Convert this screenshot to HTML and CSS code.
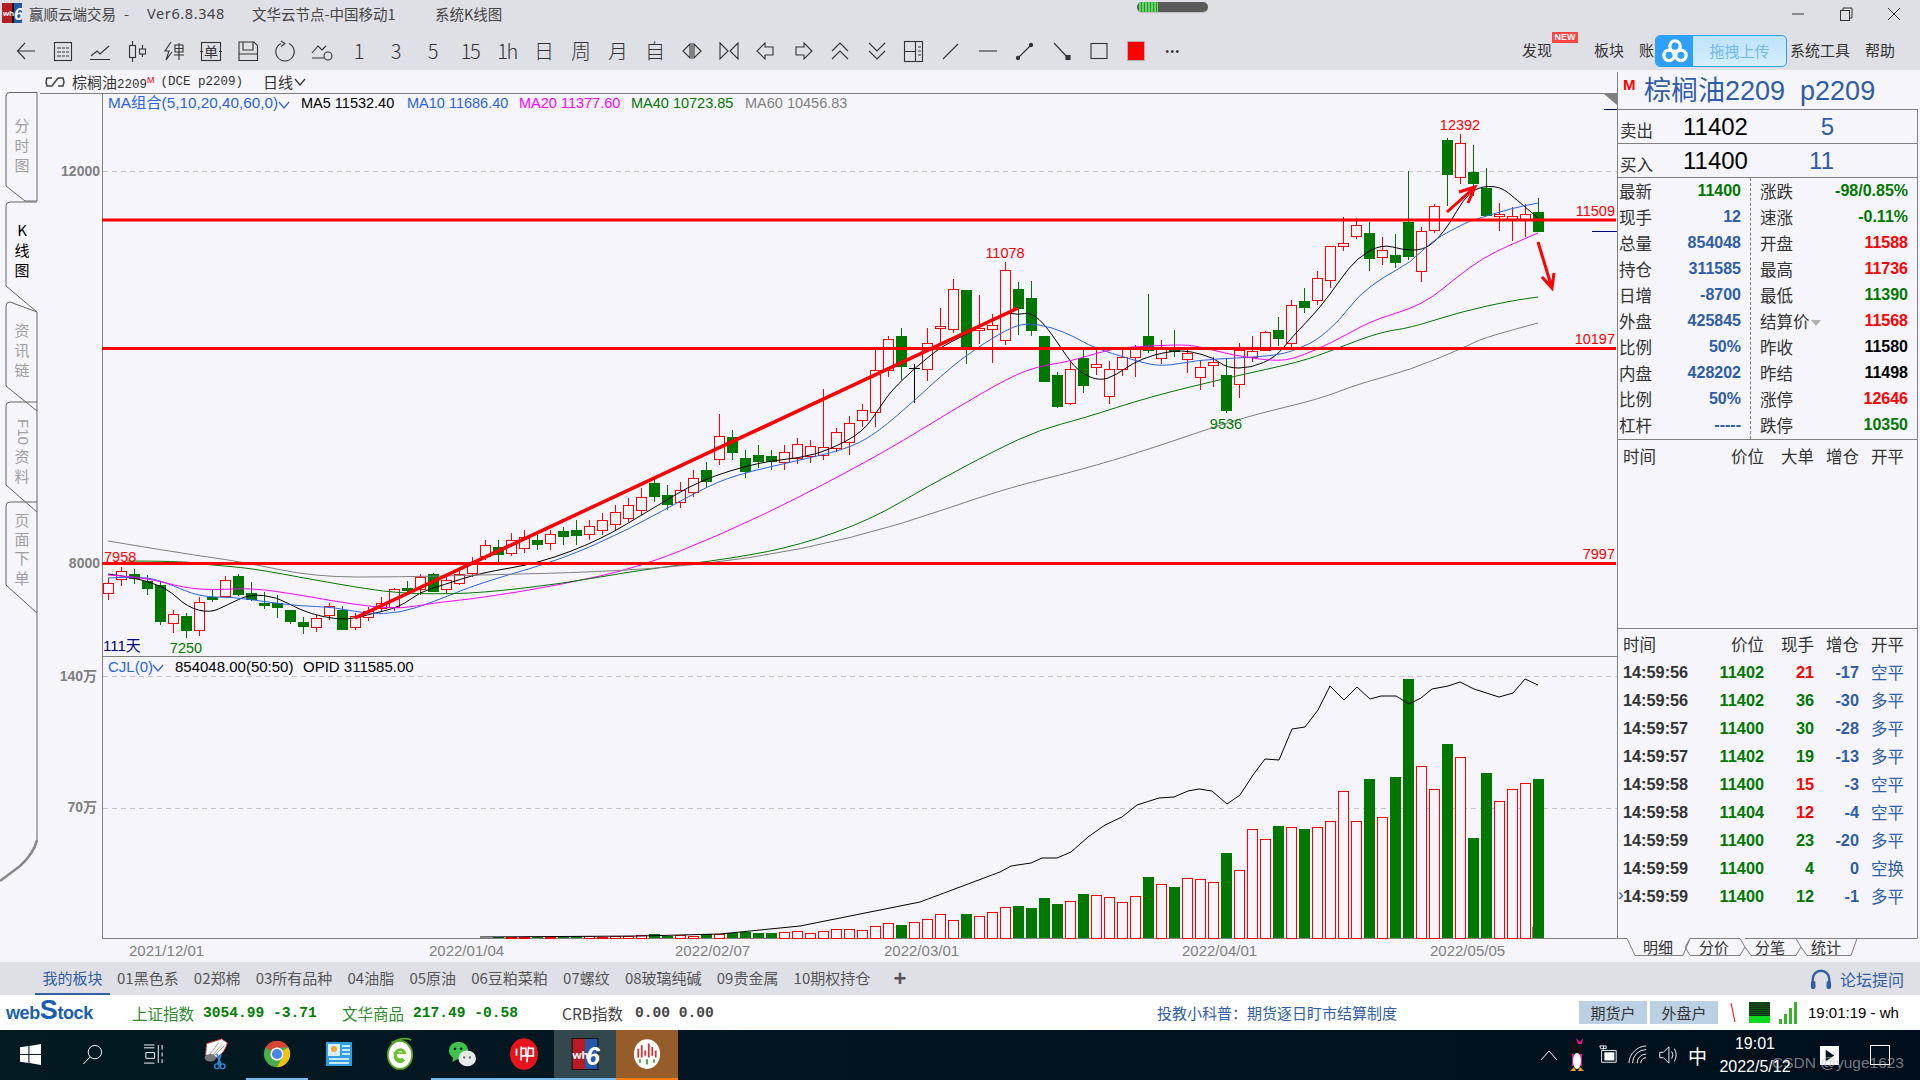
FILE: index.html
```html
<!DOCTYPE html>
<html lang="zh">
<head>
<meta charset="utf-8">
<title>赢顺云端交易</title>
<link rel="stylesheet" href="styles.css">
</head>
<body>
<div class="app">
  <header class="titlebar">
    <svg class="app-icon" viewBox="0 0 20 20"><rect width="20" height="20" fill="#111"/><rect width="10" height="20" fill="#b81c22"/><rect x="12" width="8" height="20" fill="#2458a8"/><text x="1" y="13" class="app-icon-t">wh</text><text x="12" y="17" class="app-icon-6">6</text></svg>
    <span class="tt tt-a">赢顺云端交易</span>
    <span class="tt tt-b">-</span>
    <span class="tt tt-c">Ver6.8.348</span>
    <span class="tt tt-d">文华云节点-中国移动1</span>
    <span class="tt tt-e">系统K线图</span>
    <span class="loader"><i class="loader-fill"></i></span>
    <span class="winctl">
      <svg viewBox="0 0 14 14"><path d="M1 7H13"/></svg>
      <svg viewBox="0 0 14 14"><rect x="1.5" y="3.5" width="9" height="10"/><path d="M4 3.5V1H13V11H10.5"/></svg>
      <svg viewBox="0 0 14 14"><path d="M1 1 13 13M13 1 1 13"/></svg>
    </span>
  </header>

  <nav class="toolbar">
    <span class="tb"><svg class="ic" viewBox="0 0 22 22"><path d="M20 11H3M10 3 2.5 11 10 19"/></svg></span>
    <span class="tb"><svg class="ic" viewBox="0 0 22 22"><rect x="2.5" y="2.5" width="17" height="18"/><path d="M5 8H9M10 8H13M14 8H17M5 12H9M10 12H13M14 12H17M5 16H9M10 16H13M14 16H17"/></svg></span>
    <span class="tb"><svg class="ic" viewBox="0 0 22 22"><path d="M2 16 8 11 11 14 20 6M1 19.5H21"/></svg></span>
    <span class="tb"><svg class="ic" viewBox="0 0 22 22"><path d="M6.5 1V5M6.5 18V22M16.5 5V9M16.5 14V17"/><rect x="3.5" y="5.5" width="6" height="12"/><rect x="13.5" y="9" width="6" height="5"/></svg></span>
    <span class="tb"><svg class="ic" viewBox="0 0 22 22"><path d="M8 2 2 11H6L3 20 9 12M12 5H20V12H12ZM12 8.5H20M16 3V20M11 15H21"/></svg></span>
    <span class="tb"><svg class="ic" viewBox="0 0 22 22"><rect x="1.5" y="2.5" width="19" height="18"/><path d="M0 11.5H3M19 11.5H22"/><text x="11" y="17" class="ic-t">单</text></svg></span>
    <span class="tb"><svg class="ic" viewBox="0 0 22 22"><path d="M2 2H17L20.5 5.5V20.5H2ZM6 2V10H16V2M2 14H20"/></svg></span>
    <span class="tb"><svg class="ic" viewBox="0 0 22 22"><path d="M7 3.5A9.2 9.2 0 1 0 15 3.5M7 1 11 3.5 7 6.5" /></svg></span>
    <span class="tb"><svg class="ic" viewBox="0 0 22 22"><path d="M1 13 7 6 11 10 15 6M1 18H13"/><circle cx="17" cy="16" r="4"/></svg></span>
    <span class="tb tb-t">1</span>
    <span class="tb tb-t">3</span>
    <span class="tb tb-t">5</span>
    <span class="tb tb-t tb-tt">15</span>
    <span class="tb tb-t tb-tt">1h</span>
    <span class="tb tb-t">日</span>
    <span class="tb tb-t">周</span>
    <span class="tb tb-t">月</span>
    <span class="tb tb-t">自</span>
    <span class="tb"><svg class="ic" viewBox="0 0 22 22"><path d="M9 4 2 11 9 18ZM13 4 20 11 13 18ZM11 3V19"/></svg></span>
    <span class="tb"><svg class="ic" viewBox="0 0 22 22"><path d="M2 3 10 11 2 19ZM20 3 12 11 20 19Z"/></svg></span>
    <span class="tb"><svg class="ic" viewBox="0 0 22 22"><path d="M10 3 2 11 10 19V15H18V7H10Z"/></svg></span>
    <span class="tb"><svg class="ic" viewBox="0 0 22 22"><path d="M12 3 20 11 12 19V15H4V7H12Z"/></svg></span>
    <span class="tb"><svg class="ic" viewBox="0 0 22 22"><path d="M3 11 11 3 19 11M3 19 11 11 19 19"/></svg></span>
    <span class="tb"><svg class="ic" viewBox="0 0 22 22"><path d="M3 3 11 11 19 3M3 11 11 19 19 11"/></svg></span>
    <span class="tb"><svg class="ic" viewBox="0 0 22 22"><rect x="1.5" y="1.5" width="18" height="20"/><path d="M12.5 1.5V21.5M1.5 11.5H12.5M15 7H18M15 11H18M15 15H18"/></svg></span>
    <span class="tb"><svg class="ic" viewBox="0 0 22 22"><path d="M3 19 18 4"/></svg></span>
    <span class="tb"><svg class="ic" viewBox="0 0 22 22"><path d="M2 11H20"/></svg></span>
    <span class="tb"><svg class="ic" viewBox="0 0 22 22"><path d="M3 19 18 4"/><circle cx="4" cy="18" r="1.6" class="ic-f"/><circle cx="17" cy="5" r="1.6" class="ic-f"/></svg></span>
    <span class="tb"><svg class="ic" viewBox="0 0 22 22"><path d="M3 3 17 18"/><rect x="15" y="15.5" width="4" height="4" class="ic-f"/></svg></span>
    <span class="tb"><svg class="ic" viewBox="0 0 22 22"><rect x="3" y="3.5" width="16" height="15"/></svg></span>
    <span class="tb"><i class="swatch"></i></span>
    <span class="tb tb-more">•••</span>
    <span class="tools">
      <span class="tool tool-new">发现<b class="newtag">NEW</b></span>
      <span class="tool">板块</span>
      <span class="tool">账户</span>
      <span class="tool tool-sys">系统工具</span>
      <span class="tool">帮助</span>
    </span>
    <span class="baidu">
      <span class="baidu-l"><svg viewBox="0 0 24 22"><g class="baidu-c"><circle cx="12" cy="6.5" r="4.8"/><circle cx="6.5" cy="15" r="4.8"/><circle cx="17.5" cy="15" r="4.8"/></g></svg></span>
      <span class="baidu-r">拖拽上传</span>
    </span>
  </nav>

  <main class="main">
    <svg class="rail" viewBox="0 70 38 892">
      <path class="rail-line" d="M6 186V96Q6 92.500 10 92.500H37V201H25Z"/>
      <path class="rail-line" d="M37 312 6 286V206Q6 202 10 202H37"/>
      <path class="rail-line" d="M37 411 6 386V306Q6 302 10 302L37 312"/>
      <path class="rail-line" d="M37 512 6 485V406Q6 402 10 402H37"/>
      <path class="rail-line" d="M37 613 6 585V506Q6 502 10 502H37"/>
      <path class="rail-line" d="M37 312V840"/>
      <path class="rail-curve" d="M37 840Q34 853 20 866L0 881"/>
      <text x="22" y="131" class="rt">分</text><text x="22" y="151" class="rt">时</text><text x="22" y="171" class="rt">图</text>
      <text x="22" y="236" class="rt rt-on">K</text><text x="22" y="256" class="rt rt-on">线</text><text x="22" y="276" class="rt rt-on">图</text>
      <text x="22" y="336" class="rt">资</text><text x="22" y="356" class="rt">讯</text><text x="22" y="376" class="rt">链</text>
      <text x="18" y="432" class="rt rt-rot" transform="rotate(90 18 432)">F10</text><text x="22" y="462" class="rt">资</text><text x="22" y="482" class="rt">料</text>
      <text x="22" y="526" class="rt">页</text><text x="22" y="545" class="rt">面</text><text x="22" y="564" class="rt">下</text><text x="22" y="584" class="rt">单</text>
    </svg>

    <section class="chart">
      <div class="info">
        <svg class="link-ic" viewBox="0 0 20 10"><path d="M7 1H2L1 5 2 9H7M13 1H18L19 5 18 9H13M7 9 13 1"/></svg>
        <span class="info-name">棕榈油<span class="info-mono">2209</span><sup class="info-m">M</sup></span>
        <span class="info-mono info-code">(DCE p2209)</span>
        <span class="info-per">日线<svg class="chev" viewBox="0 0 12 8"><path d="M1 1 6 7 11 1"/></svg></span>
      </div>
      <svg class="plot" viewBox="38 93 1579 869">
        <path class="frame" d="M40 93.500H1617M102.500 93V938M102 938.500H1617M102 656.500H1617"/>
        <path class="grid" d="M103 171.500H1617M103 676.500H1617M103 808.500H1617"/>
        <g id="candles"></g>
        <g id="volumes"></g>
        <g id="lines"></g>
        <path class="marker" d="M1604 109.500H1617M1592 231.500H1617"/>
        <path class="volmark" d="M1532.500 927V938"/>
        <polygon class="corner" points="1604,94 1617,94 1617,105"/>
        <rect x="102" y="218.500" width="1514" height="3" class="hline"/>
        <rect x="102" y="347" width="1514" height="3" class="hline"/>
        <rect x="102" y="562" width="1514" height="3" class="hline"/>
        <path class="trend" d="M355 618 1018 308"/>
        <path class="arrow" d="M1447 212 1475 187M1459 192 1475 187 1468 203"/>
        <path class="arrow" d="M1538 242 1552 288M1542 277 1552 288 1554 273"/>

        <text x="108" y="108" class="t-ma c-blue">MA组合(5,10,20,40,60,0)</text>
        <path class="chev-b" d="M279 102 284 108 289 102"/>
        <text x="301" y="108" class="t14 c-black">MA5 11532.40</text>
        <text x="407" y="108" class="t14 c-blue">MA10 11686.40</text>
        <text x="519" y="108" class="t14 c-mag">MA20 11377.60</text>
        <text x="631" y="108" class="t14 c-green">MA40 10723.85</text>
        <text x="745" y="108" class="t14 c-gray">MA60 10456.83</text>

        <text x="100" y="176" class="axis">12000</text>
        <text x="100" y="568" class="axis">8000</text>
        <text x="97" y="681" class="axis">140万</text>
        <text x="97" y="812" class="axis">70万</text>

        <text x="1615" y="216" class="t14 c-red end">11509</text>
        <text x="1615" y="344" class="t14 c-red end">10197</text>
        <text x="1615" y="559" class="t14 c-red end">7997</text>
        <text x="104" y="562" class="t14 c-red">7958</text>
        <text x="1460" y="130" class="t14 c-red mid">12392</text>
        <text x="1005" y="258" class="t14 c-red mid">11078</text>
        <text x="1226" y="429" class="t14 c-green mid">9536</text>
        <text x="186" y="653" class="t14 c-green mid">7250</text>
        <text x="103" y="651" class="t15 c-navy">111天</text>

        <text x="108" y="672" class="t15 c-blue">CJL(0)</text>
        <path class="chev-b" d="M153 665 158 671 163 665"/>
        <text x="175" y="672" class="t15 c-black">854048.00(50:50)</text>
        <text x="303" y="672" class="t15 c-black">OPID 311585.00</text>

        <text x="129" y="956" class="date">2021/12/01</text>
        <text x="429" y="956" class="date">2022/01/04</text>
        <text x="675" y="956" class="date">2022/02/07</text>
        <text x="884" y="956" class="date">2022/03/01</text>
        <text x="1182" y="956" class="date">2022/04/01</text>
        <text x="1430" y="956" class="date">2022/05/05</text>
      </svg>
    </section>

    <aside class="panel">
      <div class="p-title"><b class="p-m">M</b><span>棕榈油2209&nbsp;&nbsp;p2209</span></div>
      <div class="quote"><span class="q-l">卖出</span><span class="q-p">11402</span><span class="q-n">5</span></div>
      <div class="quote"><span class="q-l">买入</span><span class="q-p">11400</span><span class="q-n">11</span></div>
      <div class="stats">
        <div class="col col-l">
          <div class="s"><span>最新</span><b class="v-g">11400</b></div>
          <div class="s"><span>现手</span><b class="v-b">12</b></div>
          <div class="s"><span>总量</span><b class="v-b">854048</b></div>
          <div class="s"><span>持仓</span><b class="v-b">311585</b></div>
          <div class="s"><span>日增</span><b class="v-b">-8700</b></div>
          <div class="s"><span>外盘</span><b class="v-b">425845</b></div>
          <div class="s"><span>比例</span><b class="v-b">50%</b></div>
          <div class="s"><span>内盘</span><b class="v-b">428202</b></div>
          <div class="s"><span>比例</span><b class="v-b">50%</b></div>
          <div class="s"><span>杠杆</span><b class="v-b">-----</b></div>
        </div>
        <div class="col col-r">
          <div class="s"><span>涨跌</span><b class="v-g">-98/0.85%</b></div>
          <div class="s"><span>速涨</span><b class="v-g">-0.11%</b></div>
          <div class="s"><span>开盘</span><b class="v-r">11588</b></div>
          <div class="s"><span>最高</span><b class="v-r">11736</b></div>
          <div class="s"><span>最低</span><b class="v-g">11390</b></div>
          <div class="s"><span class="settle">结算价<i class="tri"></i></span><b class="v-r">11568</b></div>
          <div class="s"><span>昨收</span><b class="v-k">11580</b></div>
          <div class="s"><span>昨结</span><b class="v-k">11498</b></div>
          <div class="s"><span>涨停</span><b class="v-r">12646</b></div>
          <div class="s"><span>跌停</span><b class="v-g">10350</b></div>
        </div>
      </div>
      <div class="big">
        <div class="th"><span>时间</span><span>价位</span><span>大单</span><span>增仓</span><span class="oc">开平</span></div>
      </div>
      <div class="ticks">
        <div class="th"><span>时间</span><span>价位</span><span>现手</span><span>增仓</span><span class="oc">开平</span></div>
        <div class="tr"><b>14:59:56</b><b class="v-g">11402</b><b class="v-r">21</b><b class="v-b">-17</b><span class="oc v-b">空平</span></div>
        <div class="tr"><b>14:59:56</b><b class="v-g">11402</b><b class="v-g">36</b><b class="v-b">-30</b><span class="oc v-b">多平</span></div>
        <div class="tr"><b>14:59:57</b><b class="v-g">11400</b><b class="v-g">30</b><b class="v-b">-28</b><span class="oc v-b">多平</span></div>
        <div class="tr"><b>14:59:57</b><b class="v-g">11402</b><b class="v-g">19</b><b class="v-b">-13</b><span class="oc v-b">多平</span></div>
        <div class="tr"><b>14:59:58</b><b class="v-g">11400</b><b class="v-r">15</b><b class="v-b">-3</b><span class="oc v-b">空平</span></div>
        <div class="tr"><b>14:59:58</b><b class="v-g">11404</b><b class="v-r">12</b><b class="v-b">-4</b><span class="oc v-b">空平</span></div>
        <div class="tr"><b>14:59:59</b><b class="v-g">11400</b><b class="v-g">23</b><b class="v-b">-20</b><span class="oc v-b">多平</span></div>
        <div class="tr"><b>14:59:59</b><b class="v-g">11400</b><b class="v-g">4</b><b class="v-b">0</b><span class="oc v-b">空换</span></div>
        <div class="tr tr-cur"><i class="cur">›</i><b>14:59:59</b><b class="v-g">11400</b><b class="v-g">12</b><b class="v-b">-1</b><span class="oc v-b">多平</span></div>
      </div>
      <svg class="p-tabs" viewBox="1617 934 303 28">
        <path class="ptab" d="M1617.500 934V938.500M1917.500 934V938.500M1617 938.500H1627L1635 955.500H1683L1690 938.500M1690 938.500 1685 947 1690 955.500H1740L1745 947 1740 938.500H1690M1745 947 1751 955.500H1796L1801 947 1796 938.500H1745M1801 947 1807 955.500H1851L1857 938.500H1796M1857 938.500H1917"/>
        <text x="1658" y="953" class="ptab-t">明细</text>
        <text x="1714" y="953" class="ptab-t">分价</text>
        <text x="1770" y="953" class="ptab-t">分笔</text>
        <text x="1826" y="953" class="ptab-t">统计</text>
      </svg>
    </aside>
  </main>

  <div class="sheets">
    <span class="sheet sheet-on">我的板块</span>
    <span class="sheet">01黑色系</span>
    <span class="sheet">02郑棉</span>
    <span class="sheet">03所有品种</span>
    <span class="sheet">04油脂</span>
    <span class="sheet">05原油</span>
    <span class="sheet">06豆粕菜粕</span>
    <span class="sheet">07螺纹</span>
    <span class="sheet">08玻璃纯碱</span>
    <span class="sheet">09贵金属</span>
    <span class="sheet">10期权持仓</span>
    <span class="sheet-add">+</span>
    <span class="forum"><svg viewBox="0 0 24 24"><path d="M3 20V12A9 9 0 0 1 21 12V20"/><rect x="1" y="14" width="5" height="9" rx="2.400" class="forum-f"/><rect x="18" y="14" width="5" height="9" rx="2.400" class="forum-f"/></svg>论坛提问</span>
  </div>

  <div class="status">
    <span class="logo">web<span class="logo-s">S</span>tock</span>
    <span class="idx c-g1">上证指数</span><span class="num n-g n1">3054.99 -3.71</span>
    <span class="idx c-g1 i2">文华商品</span><span class="num n-g n2">217.49 -0.58</span>
    <span class="idx i3">CRB指数</span><span class="num n3">0.00 0.00</span>
    <span class="notice">投教小科普：期货逐日盯市结算制度</span>
    <span class="acct">期货户</span><span class="acct">外盘户</span>
    <svg class="slash" viewBox="0 0 6 20"><path d="M1 0 5 19"/></svg>
    <span class="meter"><i></i></span>
    <svg class="bars" viewBox="0 0 20 22"><rect x="0" y="17" width="3" height="5"/><rect x="5" y="12" width="3" height="10"/><rect x="10" y="6" width="3" height="16"/><rect x="15" y="0" width="3" height="22"/></svg>
    <span class="clock">19:01:19 - wh</span>
  </div>

  <footer class="taskbar">
    <span class="task"><svg class="t-ic" viewBox="0 0 20 20"><path class="wf" d="M0 3 8 2V9.500H0ZM9 1.800 20 0V9.500H9ZM0 10.500H8V18L0 17ZM9 10.500H20V20L9 18.200Z"/></svg></span>
    <span class="task"><svg class="t-ic" viewBox="0 0 22 22"><circle cx="13.500" cy="8.500" r="7" class="ws"/><path class="ws" d="M8.500 13.500 1.500 21"/></svg></span>
    <span class="task"><svg class="t-ic" viewBox="0 0 22 22"><path class="ws" d="M1 1H12M1 4H12M3 9H12V15H3ZM1 20H12M16 1V20M20 1V6M20 9V13M20 16V20"/></svg></span>
    <span class="task"><svg class="t-ic t-big" viewBox="0 0 28 34"><path d="M4 6 20 1 26 5Q24 14 16 20 8 24 3 18Z" fill="#fff" stroke="#d43a3a"/><path d="M7 18 17 5M10 19 20 7M13 18 23 8" stroke="#999" fill="none"/><ellipse cx="8" cy="21" rx="6" ry="4" fill="#777"/><path d="M15 17 19 28M19 17 16 28" stroke="#2b8be0" stroke-width="2" fill="none"/><circle cx="15" cy="30" r="2.500" fill="none" stroke="#2b8be0" stroke-width="1.500"/><circle cx="21" cy="30" r="2.500" fill="none" stroke="#2b8be0" stroke-width="1.500"/></svg></span>
    <span class="task"><svg class="t-ic t-big" viewBox="0 0 32 32"><circle cx="16" cy="16" r="15" fill="#4aae48"/><path d="M16 1A15 15 0 0 1 29 8.500H16A7.500 7.500 0 0 0 9.500 12.200L3 8.500A15 15 0 0 1 16 1Z" fill="#db4437"/><path d="M29 8.500A15 15 0 0 1 16 31L22.500 19.700A7.500 7.500 0 0 0 22.500 12Z" fill="#f4c20d"/><circle cx="16" cy="16" r="7.500" fill="#fff"/><circle cx="16" cy="16" r="5.800" fill="#4a86e8"/></svg></span>
    <span class="task"><svg class="t-ic t-big" viewBox="0 0 28 28"><rect x="1" y="2" width="26" height="24" fill="#2f9fe0"/><rect x="3" y="4" width="12" height="12" fill="#d8eefa"/><circle cx="9" cy="9" r="3" fill="#f0a830"/><path d="M17 6H25M17 10H25M17 14H25M4 19H24M4 23H24" stroke="#fff" stroke-width="1.500"/></svg></span>
    <span class="task"><svg class="t-ic t-big" viewBox="0 0 30 34"><ellipse cx="15" cy="18" rx="13" ry="15" fill="#fff" stroke="#5aa828" stroke-width="2"/><path d="M8 17H22A7 8 0 1 0 20.500 24L17.500 21A3.800 3.800 0 1 1 18 15H8Z" fill="#6cc02c"/><path d="M6 5Q18-2 27 2" stroke="#5aa828" stroke-width="2" fill="none"/></svg></span>
    <span class="task"><svg class="t-ic t-big" viewBox="0 0 32 30"><ellipse cx="12" cy="11" rx="11" ry="10" fill="#3fc24b"/><path d="M6 18 5 24 12 20Z" fill="#3fc24b"/><ellipse cx="22" cy="20" rx="10" ry="9" fill="#e8e8e8"/><circle cx="8" cy="9" r="1.500" fill="#123"/><circle cx="15" cy="9" r="1.500" fill="#123"/><circle cx="18.500" cy="19" r="1.300" fill="#666"/><circle cx="25" cy="19" r="1.300" fill="#666"/></svg></span>
    <span class="task"><svg class="t-ic t-big" viewBox="0 0 30 34"><ellipse cx="15" cy="17" rx="15" ry="17" fill="#e8141c"/><path d="M7 11V19M12 9V24M12 11H17V19H12M20 9 18 26M20 11H25V19H19" stroke="#fff" stroke-width="1.800" fill="none"/></svg></span>
    <span class="task task-wh"><svg class="t-ic t-big" viewBox="0 0 30 36"><rect width="30" height="36" fill="#0a0a0a"/><rect x="1" y="1" width="14" height="34" fill="#b81c22"/><rect x="15" y="1" width="14" height="34" fill="#2458a8"/><text x="1" y="24" class="wh-t">wh</text><text x="16" y="30" class="wh-6">6</text></svg></span>
    <span class="task task-or"><svg class="t-ic t-big" viewBox="0 0 32 36"><ellipse cx="16" cy="18" rx="15" ry="17" fill="#fff"/><path d="M6 12V22M10 8V22M14 14V20M18 6V22M22 10V20M26 14V22" stroke="#d83030" stroke-width="2"/><path d="M8 24V28M16 24V30M24 24V28" stroke="#3a9a3a" stroke-width="2"/></svg></span>
    <span class="tray">
      <svg class="tr-ic" viewBox="0 0 18 12"><path class="ws" d="M1 11 9 2 17 11"/></svg>
      <svg class="tr-pg" viewBox="0 0 18 36"><ellipse cx="9" cy="10" rx="5.500" ry="7" fill="#111"/><path d="M4 17H14V29H4Z" fill="#e8128c"/><ellipse cx="9" cy="24" rx="4" ry="8" fill="#fff"/><path d="M8 1 12 5 15 1 14 7 10 7Z" fill="#e8128c"/><path d="M2 34H8L6 30ZM10 34H16L12 30Z" fill="#f0a020"/></svg>
      <svg class="tr-ic tr-bat" viewBox="0 0 22 22"><path class="ws" d="M4 6H20V19H4ZM6 1V5M2 1H9V4H3Z"/><rect x="7" y="8" width="11" height="9" class="wf"/></svg>
      <svg class="tr-ic tr-wifi" viewBox="0 0 22 22"><path class="ws" d="M1 20A20 20 0 0 1 20 1M5 20A15 15 0 0 1 20 5M10 20A10 10 0 0 1 20 10M14 20A6 6 0 0 1 20 14"/></svg>
      <svg class="tr-ic tr-vol" viewBox="0 0 22 22"><path class="ws" d="M2 8H6L12 2V20L6 14H2ZM15 7Q18 11 15 15M18 4Q22 11 18 18"/></svg>
      <span class="ime">中</span>
      <span class="dt"><span>19:01</span><span>2022/5/12</span></span>
      <svg class="tr-note" viewBox="0 0 20 20"><path class="wf" d="M0 0H20V20H0Z"/><path d="M6 4 15 10 6 16Z" fill="#021820"/></svg>
      <svg class="tr-sq" viewBox="0 0 20 20"><rect x="0.500" y="0.500" width="19" height="19" class="ws"/></svg>
      <span class="mark">CSDN @yuge1623</span>
    </span>
  </footer>
</div>
<script src="chart.js"></script>
</body>
</html>
```

FILE: styles.css
```css
* { box-sizing: border-box; }
html, body { margin: 0; padding: 0; height: 100%; overflow: hidden; }
body { font-family: "Noto Sans CJK SC", "Liberation Sans", sans-serif; color: #333; background: #f5f5fb; }
.app { width: 1920px; height: 1080px; display: flex; flex-direction: column; }
svg { display: block; }

/* title */
.titlebar { height: 28px; flex: none; background: #dfe0e5; display: flex; align-items: center; font-size: 14.500px; position: relative; padding-bottom: 2px; }
.app-icon { width: 20px; height: 20px; margin-left: 2px; flex: none; }
.app-icon-t { font: bold 8px "Liberation Sans", sans-serif; fill: #fff; }
.app-icon-6 { font: italic bold 17px "Liberation Sans", sans-serif; fill: #fff; }
.tt { white-space: nowrap; color: #444; }
.tt-a { margin-left: 7px; width: 95px; }
.tt-b { width: 23px; }
.tt-c { width: 105px; letter-spacing: .6px; font-family: "Noto Sans", sans-serif; }
.tt-d { width: 183px; }
.tt-e { width: 80px; }
.loader { position: absolute; left: 1137px; top: 2px; width: 71px; height: 10px; border-radius: 5px; background: #5a5a5a; box-shadow: 0 1px 1px #bbb; overflow: hidden; }
.loader-fill { display: block; width: 19px; height: 10px; margin-left: 2px; background: repeating-linear-gradient(90deg, #5cd860 0 2px, #3b8a40 2px 3px); }
.winctl { margin-left: auto; display: flex; gap: 34px; margin-right: 19px; margin-top: 2px; align-items: center; }
.winctl svg { width: 14px; height: 14px; fill: none; stroke: #333; stroke-width: 1; }

/* toolbar */
.toolbar { height: 42px; flex: none; background: #dfe0e5; display: flex; align-items: center; padding-left: 7.500px; position: relative; }
.tb { width: 37px; flex: none; display: flex; justify-content: center; align-items: center; height: 24px; margin-top: 4px; }
.ic { width: 22px; height: 22px; fill: none; stroke: #333; stroke-width: 1.100; overflow: visible; }
.ic-f { fill: #333; }
.ic-t { font-size: 14px; fill: #333; stroke: none; text-anchor: middle; }
.tb-t { font-size: 20px; font-weight: 300; color: #333; line-height: 1; }
.tb-tt { letter-spacing: -1.500px; }
.tb-more { font: 10px "Liberation Sans", sans-serif; letter-spacing: 1.500px; color: #333; }
.swatch { width: 18px; height: 20px; background: #f00; border: 1px solid #b0b0b0; display: block; }
.tools { margin-left: auto; display: flex; align-items: center; padding-right: 25px; font-size: 15px; color: #333; }
.tool { margin-left: 15px; white-space: nowrap; position: relative; }
.tool-new { margin-right: 27px; }
.tool-sys { margin-left: 121px; }
.newtag { position: absolute; left: 30px; top: -7px; width: 26px; height: 11px; background: #f44; color: #fff; font: bold 9px/11px "Liberation Sans", sans-serif; text-align: center; }
.baidu { position: absolute; right: 133px; top: 7px; width: 132px; height: 32px; border: 1px solid #2e9ffb; border-radius: 5px; display: flex; overflow: hidden; background: linear-gradient(#bfe3fd, #d4eefe); }
.baidu-l { width: 37px; flex: none; background: #2e9ffb; display: flex; align-items: center; justify-content: center; }
.baidu-l svg { width: 26px; height: 24px; }
.baidu-c { fill: none; stroke: #fff; stroke-width: 3; }
.baidu-r { flex: 1; text-align: center; font-size: 15px; line-height: 30px; color: #6fb9f5; }

/* main */
.main { height: 892px; flex: none; display: flex; background: #f5f5fb; }
.rail { width: 38px; height: 892px; flex: none; }
.rail-line { fill: none; stroke: #666; stroke-width: 1; }
.rail-curve { fill: none; stroke: #888; stroke-width: 2.500; }
.rt { font-size: 15px; fill: #a0a0a0; text-anchor: middle; }
.rt-on { fill: #000; }
.rt-rot { font-family: "Liberation Sans", sans-serif; }

.chart { width: 1579px; flex: none; display: flex; flex-direction: column; }
.info { height: 23px; flex: none; display: flex; align-items: center; font-size: 15px; color: #333; padding-left: 7px; }
.link-ic { width: 20px; height: 10px; fill: none; stroke: #444; stroke-width: 1.500; flex: none; }
.info-name { margin-left: 7px; white-space: nowrap; }
.info-mono { font-family: "Liberation Mono", monospace; font-size: 12.500px; }
.info-m { color: #f00; font: 9px "Liberation Sans", sans-serif; vertical-align: 5px; line-height: 0; }
.info-code { margin-left: 6px; }
.info-per { margin-left: 20px; display: flex; align-items: center; gap: 1px; }
.chev { width: 12px; height: 8px; fill: none; stroke: #333; stroke-width: 1.300; }
.plot { width: 1579px; height: 869px; flex: none; font-family: "Liberation Sans", "Noto Sans CJK SC", sans-serif; }
.frame { fill: none; stroke: #808080; stroke-width: 1; shape-rendering: crispEdges; }
.grid { fill: none; stroke: #c4c4c4; stroke-width: 1; stroke-dasharray: 5 4; shape-rendering: crispEdges; }
.marker { fill: none; stroke: #000080; stroke-width: 1; shape-rendering: crispEdges; }
.volmark { fill: none; stroke: #808080; stroke-width: 1; shape-rendering: crispEdges; }
.corner { fill: #808080; }
.hline { fill: #f00; }
.trend { fill: none; stroke: #f00; stroke-width: 3.500; }
.arrow { fill: none; stroke: #f00; stroke-width: 3; }
.t14 { font-size: 14.500px; }
.t15 { font-size: 15px; }
.t-ma { font-size: 15.300px; }
.end { text-anchor: end; }
.mid { text-anchor: middle; }
.c-blue { fill: #2a64e6; }
.c-black { fill: #000; }
.c-mag { fill: #f0f; }
.c-green { fill: #007800; }
.c-gray { fill: #808080; }
.c-red { fill: #f00; }
.c-navy { fill: #000080; }
.chev-b { fill: none; stroke: #2a64e6; stroke-width: 1.200; }
.axis { font-size: 14px; font-weight: bold; fill: #808080; text-anchor: end; }
.date { font-size: 15px; fill: #808080; }
.up-b { fill: #f5f5fb; stroke: #f00; stroke-width: 1; shape-rendering: crispEdges; }
.dn-b { fill: #007800; shape-rendering: crispEdges; }
.up-w { stroke: #f00; stroke-width: 1; shape-rendering: crispEdges; }
.dn-w { stroke: #007800; stroke-width: 1; shape-rendering: crispEdges; }
.dj-w { stroke: #000; stroke-width: 1; shape-rendering: crispEdges; }
.ma { fill: none; stroke-width: 1; stroke-linejoin: round; }
.ma5 { stroke: #000; }
.ma10 { stroke: #2a64e6; }
.ma20 { stroke: #f0f; }
.ma40 { stroke: #007800; }
.ma60 { stroke: #808080; }

/* panel */
.panel { width: 303px; flex: none; display: flex; flex-direction: column; position: relative; font-size: 16.500px; }
.p-title { height: 39px; flex: none; border-left: 1px solid #808080; display: flex; align-items: flex-start; font-size: 27px; color: #2f5da8; line-height: 39px; white-space: nowrap; font-family: "Liberation Sans", "Noto Sans CJK SC", sans-serif; margin-top: 2px; margin-bottom: -2px; }
.p-m { color: #f00; font-size: 15px; width: 26px; padding-left: 5px; line-height: 26px; flex: none; }
.quote { height: 34px; flex: none; border-left: 1px solid #808080; border-right: 1px solid #808080; border-top: 1px solid #808080; width: 301px; position: relative; display: flex; align-items: center; }
.q-l { margin-left: 2px; margin-top: 6px; width: 63px; }
.q-p { font: 24px "Liberation Sans", sans-serif; color: #000; width: 67px; }
.q-n { font: 24px "Liberation Sans", sans-serif; color: #2f5da8; margin-left: 17px; width: 67px; text-align: right; }
.stats { height: 263px; flex: none; width: 301px; border: 1px solid #808080; display: flex; }
.col { display: flex; flex-direction: column; }
.col-l { width: 133px; padding: 0 9px 0 1px; border-right: 1px dashed #808080; }
.col-r { width: 166px; padding: 0 9px 0 9px; }
.s { height: 26px; display: flex; justify-content: space-between; align-items: center; white-space: nowrap; }
.s span { margin-top: -1px; }
.s b { font: bold 16px "Liberation Sans", sans-serif; }
.settle { display: flex; align-items: center; }
.tri { width: 0; height: 0; border: 5.500px solid transparent; border-top: 6px solid #b0b0b0; border-bottom: 0; margin-left: 1px; margin-top: 5px; }
.v-g { color: #007800; }
.v-b { color: #2f5da8; }
.v-r { color: #f00; }
.v-k { color: #000; }
.big { height: 188px; flex: none; width: 301px; border-left: 1px solid #808080; border-right: 1px solid #808080; padding-top: 1px; }
.th, .tr { display: grid; grid-template-columns: 71px 70px 50px 45px 45px; padding-left: 5px; align-items: center; white-space: nowrap; }
.th { height: 30px; }
.ticks .th { height: 29px; }
.th span:not(:first-child) { text-align: right; }
.ticks { height: 306px; flex: none; width: 301px; border: 1px solid #808080; border-bottom: 0; }
.tr { height: 28px; position: relative; }
.tr b { font: bold 16.300px "Liberation Sans", sans-serif; text-align: right; }
.tr b:first-child, .tr-cur b:nth-of-type(1) { text-align: left; color: #333; }
.tr .oc { text-align: right; font-size: 16.500px; }
.cur { position: absolute; left: 0; top: 3px; font: 17px "Liberation Sans", sans-serif; color: #2f5da8; }
.p-tabs { width: 303px; height: 28px; flex: none; }
.ptab { fill: none; stroke: #808080; stroke-width: 1; }
.ptab-t { font-size: 15px; fill: #333; text-anchor: middle; }

/* sheets */
.sheets { height: 33px; flex: none; background: #dfe0e5; display: flex; align-items: center; padding-left: 35px; font-size: 15px; color: #555; white-space: nowrap; }
.sheet { margin-right: 15.200px; height: 33px; line-height: 32px; }
.sheet-on { color: #2f5da8; width: 75px; text-align: center; border-bottom: 2px solid #2f5da8; margin-right: 7px; }
.sheet-add { font: bold 22px "Liberation Sans", sans-serif; color: #555; margin-left: 8px; }
.forum { margin-left: auto; margin-right: 16px; display: flex; align-items: center; font-size: 16px; color: #2f5da8; gap: 6px; }
.forum svg { width: 26px; height: 22px; fill: none; stroke: #2f5da8; stroke-width: 2.500; }
.forum-f { fill: #2f5da8; stroke: none; }

/* status */
.status { height: 35px; flex: none; background: #fff; display: flex; align-items: center; font-size: 15.500px; white-space: nowrap; }
.logo { width: 132px; padding-left: 6px; font: bold 18px "Liberation Sans", sans-serif; color: #1a5fb4; letter-spacing: -.4px; }
.logo-s { font-size: 27px; line-height: 18px; }
.idx { color: #444; }
.c-g1 { color: #2d8a2d; }
.num { font: bold 14.600px "Liberation Mono", monospace; color: #333; margin-left: 9px; }
.n-g { color: #008000; }
.n1 { width: 139px; }
.n2 { width: 149px; }
.n3 { margin-left: 12px; width: 522px; color: #444; }
.notice { font-size: 15px; color: #2f5da8; width: 422px; }
.acct { width: 68px; height: 23px; background: #bcd0e3; text-align: center; line-height: 23px; font-size: 15px; margin-right: 3px; }
.slash { width: 6px; height: 20px; fill: none; stroke: #f00; stroke-width: 1; margin-left: 9px; }
.meter { width: 21px; height: 21px; margin-left: 13px; background: repeating-linear-gradient(0deg, #0a5a12 0 1px, #18301a 1px 2px); display: flex; align-items: flex-end; }
.meter i { display: block; width: 100%; height: 7px; background: #0cdb20; }
.bars { width: 20px; height: 22px; margin-left: 9px; fill: #34b52a; }
.clock { margin-left: 9px; font: 15px "Liberation Sans", sans-serif; color: #000; }

/* taskbar */
.taskbar { height: 50px; flex: none; background: linear-gradient(90deg, #031a22, #021420 50%, #010f1c); display: flex; position: relative; }
.task { width: 61.600px; height: 50px; flex: none; display: flex; align-items: center; justify-content: center; border-bottom: 2px solid transparent; }
.task:nth-child(5), .task:nth-child(8), .task:nth-child(9) { border-bottom-color: #76b9ed; }
.task-wh { background: #33474f; border-bottom-color: #76b9ed; }
.task-or { background: #965d2a; border-bottom-color: #ff7a12; }
.t-ic { width: 21px; height: 21px; overflow: visible; }
.t-big { width: 28px; height: 32px; }
.wf { fill: #fff; }
.ws { fill: none; stroke: #fff; stroke-width: 1; }
.wh-t { font: bold 13px "Liberation Sans", sans-serif; fill: #fff; }
.wh-6 { font: italic bold 28px "Liberation Sans", sans-serif; fill: #fff; }
.tray { margin-left: auto; display: flex; align-items: center; color: #fff; position: relative; padding-right: 30px; }
.tr-ic { width: 18px; height: 12px; margin-right: 10px; }
.tr-pg { width: 18px; height: 36px; margin-right: 12px; }
.tr-bat, .tr-wifi, .tr-vol { width: 20px; height: 20px; margin-right: 10px; }
.ime { font-size: 19px; width: 28px; }
.dt { display: flex; flex-direction: column; align-items: center; width: 78px; font: 16px/23px "Liberation Sans", sans-serif; }
.tr-note { width: 19px; height: 19px; margin-left: 26px; }
.tr-sq { width: 20px; height: 20px; margin-left: 31px; }
.mark { position: absolute; right: 16px; top: 24px; font: 15.500px "Liberation Sans", sans-serif; color: rgba(190, 190, 190, .62); white-space: nowrap; }
```

FILE: chart.js
```js
// [kind, bodyTop, bodyBottom, wickTop, wickBottom]  r = up (red outline), g = down (green), k = doji
var C = [
['r',583,593,578,600],['r',571,579,567,586],['g',574,579,569,584],['g',581,589,575,595],['g',585,622,582,625],
['r',614,623,610,633],['g',616,631,613,638],['r',602,630,597,636],['g',597,600,590,602],['r',580,596,576,597],
['g',576,595,574,596],['g',593,600,582,601],['g',603,606,592,609],['g',603,608,595,618],['g',610,622,610,624],
['g',622,627,617,634],['r',618,627,615,632],['r',606,615,603,620],['g',610,630,606,630],['r',616,627,613,630],
['r',611,617,607,621],['r',603,608,597,612],['r',589,607,588,611],['g',588,591,581,595],['r',577,589,574,595],
['g',574,592,573,592],['r',580,589,577,593],['r',574,583,571,585],['r',562,573,557,577],['r',545,556,540,560],
['g',547,555,540,562],['r',540,553,533,556],['r',537,548,530,553],['g',540,545,535,550],['r',534,543,530,550],
['g',531,537,527,545],['g',530,536,520,545],['r',526,534,520,540],['r',520,530,513,535],['r',512,524,505,530],
['r',505,518,498,522],['r',497,510,488,515],['g',483,497,478,502],['g',495,505,485,510],['r',490,502,482,508],
['r',478,492,470,497],['g',470,482,462,488],['r',436,459,414,465],['g',437,453,430,460],['g',458,472,450,478],
['g',455,462,445,468],['g',456,462,450,470],['r',452,462,445,470],['r',444,458,438,464],['r',446,456,440,463],
['r',447,455,389,460],['r',432,448,428,452],['r',423,442,416,455],['r',410,420,404,427],['r',370,412,350,427],
['r',339,370,336,377],['g',336,367,328,380],['k',368,368,364,403],['r',343,369,328,381],['r',326,328,308,343],
['r',289,329,279,333],['g',290,347,290,364],['r',328,330,295,344],['r',325,329,314,363],['r',270,340,262,345],
['g',289,309,282,335],['g',298,331,281,336],['g',336,382,336,382],['g',375,407,372,408],['r',369,403,360,405],
['g',358,386,350,393],['r',364,367,348,375],['r',369,396,361,404],['r',357,369,348,376],['r',347,357,345,377],
['g',336,351,294,353],['r',348,358,340,364],['g',347,352,330,357],['r',353,359,347,373],['r',367,377,361,390],
['r',362,365,357,387],['g',375,411,359,413],['r',350,384,343,398],['r',351,357,336,362],['r',332,350,331,351],
['g',330,339,317,346],['r',305,343,300,348],['g',301,308,288,313],['r',278,300,271,305],['r',246,280,246,288],
['r',243,246,217,251],['r',225,236,218,239],['g',233,259,222,271],['r',250,257,237,265],['g',255,263,234,268],
['g',222,257,171,260],['r',231,271,227,282],['r',206,230,204,233],['g',140,175,138,206],['r',143,177,134,184],
['g',172,184,145,196],['g',188,216,168,216],['r',214,216,203,231],['r',216,220,207,241],['r',214,219,204,237],
['g',212,232,198,232]
];

// volume heights for candles 30..68; 69+ are bar tops taken from the sub-chart
var VLOW = [1,1,1,1,1,1,2,2,1,2,2,3,4,2,3,2,4,4,5,6,5,5,6,7,5,7,9,9,8,12,15,13,16,19,24,18,24,22,26];
var VTOP = [907,906,908,898,904,901,894,895,897,902,896,877,884,887,878,879,882,853,870,829,839,826,827,829,827,821,791,821,779,817,777,679,766,789,744,757,838,773,801,789,783,779];

var MA = {
  ma5:  [[108,574],[133,577],[167,588],[187,607],[210,613],[227,605],[250,594],[277,597],[300,610],[323,617],[347,620],[367,615],[400,607],[420,592],[443,585],[480,573],[540,563],[600,540],[650,510],[700,480],[760,462],[800,458],[829,450],[863,432],[880,407],[892,390],[916,367],[941,347],[961,337],[986,323],[1006,312],[1018,315],[1031,312],[1047,327],[1067,357],[1080,373],[1100,381],[1116,375],[1133,363],[1153,355],[1173,351],[1190,351],[1214,358],[1227,368],[1251,368],[1276,357],[1292,337],[1320,308],[1340,280],[1357,258],[1382,244],[1403,250],[1423,250],[1437,240],[1450,223],[1463,200],[1477,187],[1500,186],[1517,200],[1538,218]],
  ma10: [[108,578],[143,576],[167,583],[200,597],[233,597],[267,602],[300,606],[333,607],[367,614],[400,613],[433,602],[480,583],[560,560],[628,530],[700,490],[735,475],[800,460],[843,450],[871,437],[904,410],[953,365],[986,342],[1010,328],[1027,323],[1051,327],[1075,337],[1092,347],[1133,360],[1161,367],[1198,360],[1239,358],[1280,355],[1300,348],[1317,340],[1340,320],[1357,297],[1383,277],[1410,263],[1433,240],[1467,222],[1480,218],[1513,208],[1538,203]],
  ma20: [[108,575],[143,577],[185,588],[213,590],[253,588],[300,595],[333,601],[367,606],[400,609],[433,603],[480,598],[560,585],[640,567],[720,535],[800,497],[888,450],[953,410],[1010,377],[1039,366],[1067,362],[1108,350],[1129,347],[1169,345],[1194,345],[1231,355],[1280,362],[1304,355],[1333,342],[1360,327],[1380,318],[1410,309],[1433,297],[1457,277],[1483,258],[1510,245],[1538,233]],
  ma40: [[127,561],[180,561],[210,565],[250,568],[315,580],[367,589],[400,593],[433,594],[480,593],[560,584],[640,570],[735,558],[800,545],[870,520],[930,485],[996,450],[1039,430],[1084,418],[1149,397],[1231,377],[1300,362],[1333,350],[1380,332],[1410,328],[1460,312],[1510,301],[1538,297]],
  ma60: [[108,541],[180,553],[243,562],[315,577],[400,577],[480,575],[600,572],[700,565],[800,550],[900,525],[1000,490],[1080,470],[1147,450],[1240,418],[1320,399],[1358,384],[1410,370],[1463,348],[1483,338],[1538,323]]
};
var CJL = [[480,937],[640,936],[720,934],[800,926],[860,914],[920,902],[1000,872],[1011,866],[1031,863],[1042,858],[1057,858],[1071,852],[1088,837],[1105,825],[1122,817],[1137,805],[1159,798],[1174,797],[1188,791],[1199,789],[1212,791],[1227,804],[1240,795],[1253,775],[1265,759],[1279,760],[1292,729],[1305,727],[1318,710],[1330,686],[1344,700],[1357,687],[1370,699],[1381,696],[1396,696],[1409,704],[1421,698],[1432,689],[1448,686],[1460,682],[1474,689],[1499,697],[1513,693],[1525,679],[1538,685]];

var NS = 'http://www.w3.org/2000/svg';
function add(parent, tag, cls, attrs) {
  var n = document.createElementNS(NS, tag);
  n.setAttribute('class', cls);
  for (var k in attrs) n.setAttribute(k, attrs[k]);
  parent.appendChild(n);
}
// rounds the corners of a traced line through the midpoints of its segments
function smooth(p) {
  var d = 'M' + p[0].join(' ');
  for (var i = 1; i < p.length - 1; i++) {
    d += 'Q' + p[i].join(' ') + ' ' + (p[i][0] + p[i + 1][0]) / 2 + ' ' + (p[i][1] + p[i + 1][1]) / 2;
  }
  return d + 'L' + p[p.length - 1].join(' ');
}
var candles = document.getElementById('candles');
var volumes = document.getElementById('volumes');
var lines = document.getElementById('lines');

C.forEach(function (c, i) {
  var x = 108 + 13 * i, mid = x + 0.5;
  var up = c[0] !== 'g';
  var wick = c[0] === 'r' ? 'up-w' : c[0] === 'g' ? 'dn-w' : 'dj-w';
  add(candles, 'line', wick, { x1: mid, x2: mid, y1: c[3], y2: c[4] });
  if (c[0] === 'k') {
    add(candles, 'line', wick, { x1: x - 5, x2: x + 6, y1: c[1] + 0.5, y2: c[1] + 0.5 });
  } else if (up) {
    add(candles, 'rect', 'up-b', { x: x - 4.5, y: c[1] + 0.5, width: 10, height: c[2] - c[1] });
  } else {
    add(candles, 'rect', 'dn-b', { x: x - 5, y: c[1], width: 11, height: c[2] - c[1] });
  }
  if (i < 30) return;
  var top = i >= 69 ? VTOP[i - 69] : 938 - VLOW[i - 30];
  if (up) {
    add(volumes, 'rect', 'up-b', { x: x - 4.5, y: top + 0.5, width: 10, height: 938 - top });
  } else {
    add(volumes, 'rect', 'dn-b', { x: x - 5, y: top, width: 11, height: 938 - top });
  }
});

Object.keys(MA).forEach(function (k) {
  add(lines, 'path', 'ma ' + k, { d: smooth(MA[k]) });
});
add(lines, 'polyline', 'ma ma5', {
  points: CJL.map(function (p) { return p.join(','); }).join(' ')
});
```
